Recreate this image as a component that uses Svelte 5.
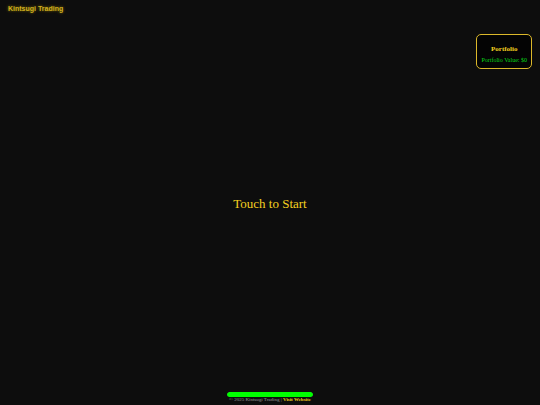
<script>
  let { cash = 0, progress = 100 } = $props();

  let value = $derived(`$${cash}`);
</script>

<div class="app">
  <header>
    <h1>Kintsugi Trading</h1>
  </header>

  <aside class="portfolio">
    <h2>Portfolio</h2>
    <p>Portfolio Value: {value}</p>
  </aside>

  <main>
    <button class="start">Touch to Start</button>
  </main>

  <footer>
    <div class="progress">
      <div class="progress-fill" style={`width: ${progress}%`}></div>
    </div>
    <p>© 2025 Kintsugi Trading | <a href="#website">Visit Website</a></p>
  </footer>
</div>

<style>
  :global(body) { background: #0d0d0d; }
  .app { position: relative; display: flex; flex-direction: column; height: 100vh; overflow: hidden; font-family: "Liberation Serif", "Times New Roman", serif; color: #f5d020; }
  h1, h2, p { margin: 0; }
  header { padding: 4px 8px; }
  h1 { font: bold 7px/9px "Liberation Sans", Arial, sans-serif; color: #d0b020; text-shadow: 0 0 3px #8f7800; }
  .portfolio { position: absolute; top: 34px; right: 8px; padding: 10px 4px 4px; border: 1px solid #dcb82a; border-radius: 5px; background: #040404; text-align: center; white-space: nowrap; }
  .portfolio h2 { font-size: 7px; line-height: 8px; margin-bottom: 4px; }
  .portfolio p { font-size: 6px; line-height: 7px; color: #08d818; }
  main { flex: 1; display: flex; align-items: center; justify-content: center; padding-bottom: 2px; }
  .start { padding: 0; border: 0; background: none; color: inherit; font: 13px/16px "Liberation Serif", "Times New Roman", serif; cursor: pointer; }
  footer { display: flex; flex-direction: column; align-items: center; padding-bottom: 2px; }
  footer p { font-size: 5px; line-height: 6px; color: #999; }
  footer a { color: #f5d020; font-weight: bold; text-decoration: none; }
  .progress { width: 16%; height: 5px; border-radius: 3px; background: #333; overflow: hidden; }
  .progress-fill { height: 100%; border-radius: 3px; background: #00ff00; }
</style>
